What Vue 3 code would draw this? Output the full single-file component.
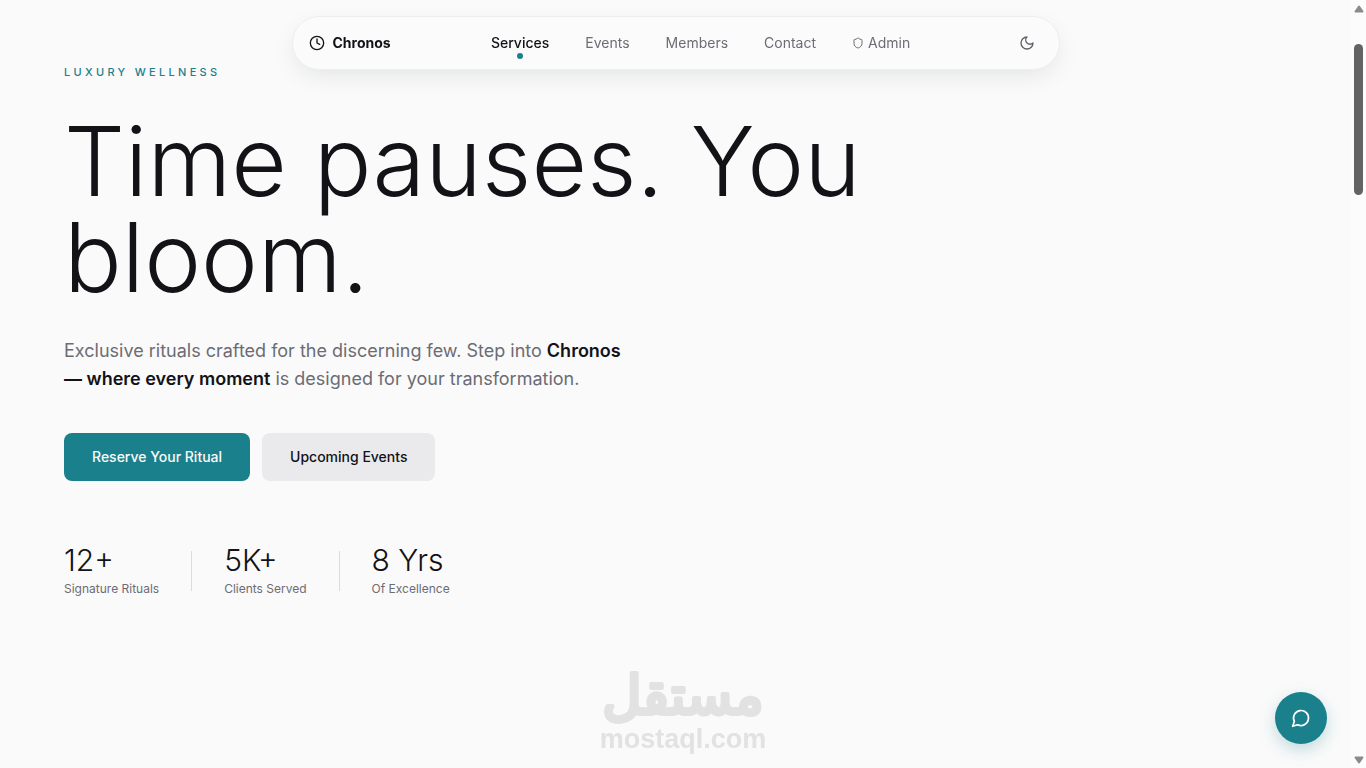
<template>
  <div class="page">
    <header class="navbar">
      <a class="brand" href="#">
        <svg class="icon" viewBox="0 0 24 24" width="16" height="16">
          <circle cx="12" cy="12" r="10" />
          <path d="M12 6v6l4 2" />
        </svg>
        Chronos
      </a>
      <nav class="links">
        <a v-for="link in links" :key="link.name" class="link" :class="{ active: link.name === current }"
          :href="'#' + link.name.toLowerCase()" @click.prevent="current = link.name">
          <svg v-if="link.shield" class="icon" viewBox="0 0 24 24" width="12" height="12">
            <path d="M20 13c0 5-3.500 7.500-7.660 8.950a1 1 0 0 1-.67-.01C7.500 20.500 4 18 4 13V6a1 1 0 0 1 1-1c2 0 4.500-1.200 6.240-2.720a1.170 1.170 0 0 1 1.520 0C14.510 3.810 17 5 19 5a1 1 0 0 1 1 1z" />
          </svg>
          {{ link.name }}
        </a>
      </nav>
      <button class="theme-toggle" type="button" aria-label="Toggle theme">
        <svg class="icon" viewBox="0 0 24 24" width="16" height="16">
          <path d="M12 3a6 6 0 0 0 9 9 9 9 0 1 1-9-9Z" />
        </svg>
      </button>
    </header>

    <main class="hero">
      <p class="eyebrow">Luxury Wellness</p>
      <h1>Time pauses. You bloom.</h1>
      <p class="lead">
        Exclusive rituals crafted for the discerning few. Step into
        <strong>Chronos — where every moment</strong> is designed for your transformation.
      </p>
      <div class="actions">
        <button class="btn primary" type="button">Reserve Your Ritual</button>
        <button class="btn" type="button">Upcoming Events</button>
      </div>
      <ul class="stats">
        <li v-for="stat in stats" :key="stat.label">
          <span class="value">{{ stat.value }}</span>
          <span class="label">{{ stat.label }}</span>
        </li>
      </ul>
    </main>

    <div class="watermark">
      <svg viewBox="0 0 180 68" width="180" height="68">
        <text class="mark-ar" x="90" y="56" text-anchor="middle" direction="rtl" lang="ar">مستقل</text>
      </svg>
      <span class="mark-en">mostaql.com</span>
    </div>

    <button class="chat" type="button" aria-label="Open chat">
      <svg class="icon" viewBox="0 0 24 24" width="20" height="20">
        <path d="M7.900 20A9 9 0 1 0 4 16.100L2 22Z" />
      </svg>
    </button>

    <div class="scrollbar">
      <svg viewBox="0 0 10 8" width="10" height="8"><path d="M5 1.500 8.500 6.500h-7z" /></svg>
      <div class="track"><div class="thumb"></div></div>
      <svg viewBox="0 0 10 8" width="10" height="8"><path d="M5 6.500 8.500 1.500h-7z" /></svg>
    </div>
  </div>
</template>

<script setup>
import { ref } from 'vue';

const current = ref('Services');
const links = [
  { name: 'Services' },
  { name: 'Events' },
  { name: 'Members' },
  { name: 'Contact' },
  { name: 'Admin', shield: true }
];
const stats = [
  { value: '12+', label: 'Signature Rituals' },
  { value: '5K+', label: 'Clients Served' },
  { value: '8 Yrs', label: 'Of Excellence' }
];
</script>

<style>
body {
  background: #fafafa;
}
</style>

<style scoped>
.page {
  min-height: 100vh;
  box-sizing: border-box;
  padding-right: 15px;
  font-family: Inter, "Liberation Sans", sans-serif;
  color: #121217;
}

.icon {
  fill: none;
  stroke: currentColor;
  stroke-width: 2;
  stroke-linecap: round;
  stroke-linejoin: round;
  flex-shrink: 0;
}

button {
  font-family: inherit;
  border: none;
  cursor: pointer;
}

a {
  color: inherit;
  text-decoration: none;
}

/* Floating navigation */
.navbar {
  position: fixed;
  top: 16px;
  left: 0;
  right: 15px;
  max-width: 768px;
  margin: 0 auto;
  padding: 8px 16px;
  box-sizing: border-box;
  display: flex;
  align-items: center;
  justify-content: space-between;
  background: #fbfbfb;
  border: 1px solid #ededee;
  border-radius: 27px;
  box-shadow: 0 8px 24px -4px rgba(18, 30, 32, 0.1);
  z-index: 10;
}

.brand {
  display: flex;
  align-items: center;
  gap: 8px;
  font-size: 14px;
  line-height: 20px;
  font-weight: 700;
}

.links {
  display: flex;
}

.link {
  position: relative;
  display: flex;
  align-items: center;
  gap: 4px;
  padding: 8px 18px;
  font-size: 14px;
  line-height: 20px;
  color: #6c6c75;
}

.link.active {
  color: #121217;
  font-weight: 500;
}

.link.active::after {
  content: "";
  position: absolute;
  bottom: 2px;
  left: 50%;
  width: 6px;
  height: 6px;
  margin-left: -3px;
  border-radius: 50%;
  background: #1a808b;
}

.theme-toggle {
  width: 32px;
  height: 32px;
  padding: 0;
  display: grid;
  place-items: center;
  background: none;
  color: #5f5f68;
}

/* Hero */
.hero {
  max-width: 1024px;
  padding: 64px 64px 0;
  box-sizing: border-box;
}

.eyebrow {
  margin: 0 0 32px;
  font-size: 11px;
  line-height: 17px;
  font-weight: 500;
  letter-spacing: 0.3em;
  text-transform: uppercase;
  color: #1a808b;
}

h1 {
  margin: 0;
  font-size: 96px;
  line-height: 96px;
  font-weight: 300;
}

.lead {
  max-width: 576px;
  margin: 32px 0 0;
  font-size: 18px;
  line-height: 28px;
  color: #6c6c75;
}

.lead strong {
  font-weight: 600;
  color: #121217;
}

.actions {
  display: flex;
  gap: 12px;
  margin-top: 40px;
}

.btn {
  height: 48px;
  padding: 0 28px;
  border-radius: 8px;
  font-size: 14px;
  line-height: 20px;
  font-weight: 500;
  background: #eaeaec;
  color: #121217;
}

.btn.primary {
  background: #1a808b;
  color: #fafafa;
}

.stats {
  display: flex;
  align-items: center;
  margin: 64px 0 0;
  padding: 0;
  list-style: none;
}

.stats li {
  display: flex;
  flex-direction: column;
  gap: 6px;
}

.stats li + li {
  position: relative;
  margin-left: 32px;
  padding-left: 33px;
}

.stats li + li::before {
  content: "";
  position: absolute;
  left: 0;
  top: 6px;
  width: 1px;
  height: 40px;
  background: #dcdcdf;
}

.value {
  font-size: 30px;
  line-height: 30px;
  font-weight: 300;
}

.label {
  font-size: 12px;
  line-height: 16px;
  color: #6c6c75;
}

/* Overlays */
.watermark {
  position: fixed;
  left: 0;
  right: 0;
  bottom: 16px;
  display: flex;
  flex-direction: column;
  align-items: center;
  color: #e2e2e2;
  pointer-events: none;
}

.mark-ar {
  font-family: "DejaVu Sans", sans-serif;
  font-size: 54px;
  fill: #e2e2e2;
  stroke: #e2e2e2;
  stroke-width: 4;
  stroke-linejoin: round;
}

.mark-en {
  font-family: "Liberation Sans", sans-serif;
  font-size: 27px;
  line-height: 26px;
  font-weight: 700;
}

.chat {
  position: fixed;
  right: 39px;
  bottom: 24px;
  width: 52px;
  height: 52px;
  padding: 0;
  display: grid;
  place-items: center;
  border-radius: 50%;
  background: #1a808b;
  color: #fff;
  box-shadow: 0 6px 16px rgba(26, 128, 139, 0.25);
}

.scrollbar {
  position: fixed;
  top: 0;
  right: 0;
  bottom: 0;
  width: 15px;
  padding: 5px 0 4px;
  box-sizing: border-box;
  display: flex;
  flex-direction: column;
  align-items: center;
  background: #fcfcfc;
}

.scrollbar svg {
  fill: #8b8b8b;
  stroke: #8b8b8b;
  stroke-width: 2;
  stroke-linejoin: round;
}

.track {
  flex: 1;
  width: 9px;
  padding: 31px 0;
}

.thumb {
  height: 22.2%;
  border-radius: 5px;
  background: #636363;
}
</style>
